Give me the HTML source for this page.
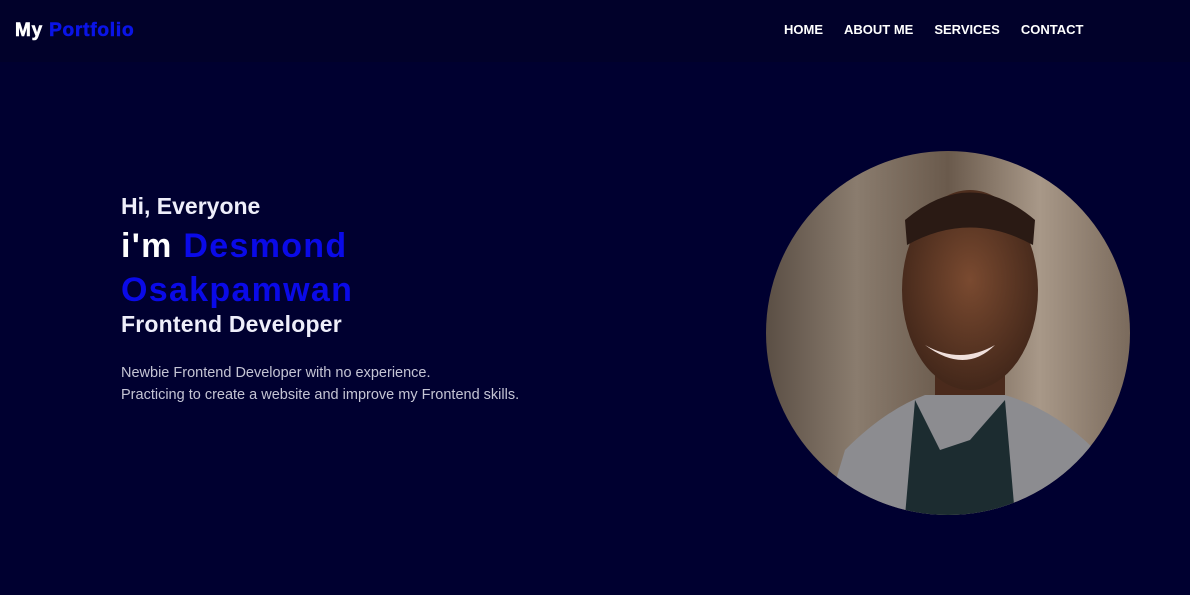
<!DOCTYPE html>
<html><head><meta charset="utf-8"><style>
*{margin:0;padding:0;box-sizing:border-box}
body{width:1190px;height:595px;background:#000030;font-family:"Liberation Sans",Arial,sans-serif;overflow:hidden;position:relative}
header{position:absolute;left:0;top:0;width:1190px;height:62px;background:#01012a}
.logo{position:absolute;left:15px;top:20px;font-size:19px;font-weight:bold;color:#fff;letter-spacing:0.8px;-webkit-text-stroke:0.6px currentColor}
.logo span{color:#0a14e6}
nav{position:absolute;top:22px;left:784px;font-size:13px;font-weight:bold;color:#fff}
nav a{margin-right:21px;color:#fff;text-decoration:none}
.t{position:absolute;left:121px;color:#fff;font-weight:bold;white-space:nowrap}
.b{color:#0a0ae8}
.big{letter-spacing:1.3px}
p{position:absolute;left:121px;top:362px;color:#c4c4d4;font-size:14.5px;line-height:22px}
</style></head><body>
<header><div class="logo">My <span>Portfolio</span></div>
<nav><a>HOME</a><a>ABOUT ME</a><a>SERVICES</a><a>CONTACT</a></nav></header>
<div class="t" style="top:193px;font-size:23px;color:#eeeefa">Hi, Everyone</div>
<div class="t big" style="top:227px;font-size:34px">i'm <span class="b">Desmond</span></div>
<div class="t b big" style="top:271px;font-size:34px">Osakpamwan</div>
<div class="t" style="top:311px;font-size:23px;color:#eeeefa;letter-spacing:0.2px">Frontend Developer</div>
<p>Newbie Frontend Developer with no experience.<br>Practicing to create a website and improve my Frontend skills.</p>
<svg style="position:absolute;left:765px;top:150px" width="366" height="366" viewBox="0 0 366 366">
<defs><clipPath id="c"><circle cx="183" cy="183" r="182"/></clipPath>
<linearGradient id="bg" x1="0" x2="1"><stop offset="0" stop-color="#5a4e44"/><stop offset="0.25" stop-color="#8a7c6e"/><stop offset="0.5" stop-color="#6a5a4c"/><stop offset="0.75" stop-color="#a89888"/><stop offset="1" stop-color="#7a6a5c"/></linearGradient>
<radialGradient id="f" cx="0.5" cy="0.45" r="0.6"><stop offset="0" stop-color="#7a4a30"/><stop offset="1" stop-color="#3e2418"/></radialGradient></defs>
<g clip-path="url(#c)">
<rect width="366" height="366" fill="url(#bg)"/>
<rect x="170" y="220" width="70" height="80" fill="#4a2a1c"/>
<ellipse cx="205" cy="140" rx="68" ry="100" fill="url(#f)"/>
<path d="M140 70 Q205 15 270 70 L268 95 Q205 60 142 95Z" fill="#2a1a14"/>
<path d="M160 195 Q195 215 230 195 Q200 225 160 195Z" fill="#f0e0dc"/>
<path d="M60 366 L80 300 Q120 260 160 245 L240 245 Q290 260 330 300 L350 366Z" fill="#8c8c90"/>
<path d="M150 250 L175 300 L205 290 L240 250 L250 366 L140 366Z" fill="#1c2c30"/>
</g></svg>
</body></html>
